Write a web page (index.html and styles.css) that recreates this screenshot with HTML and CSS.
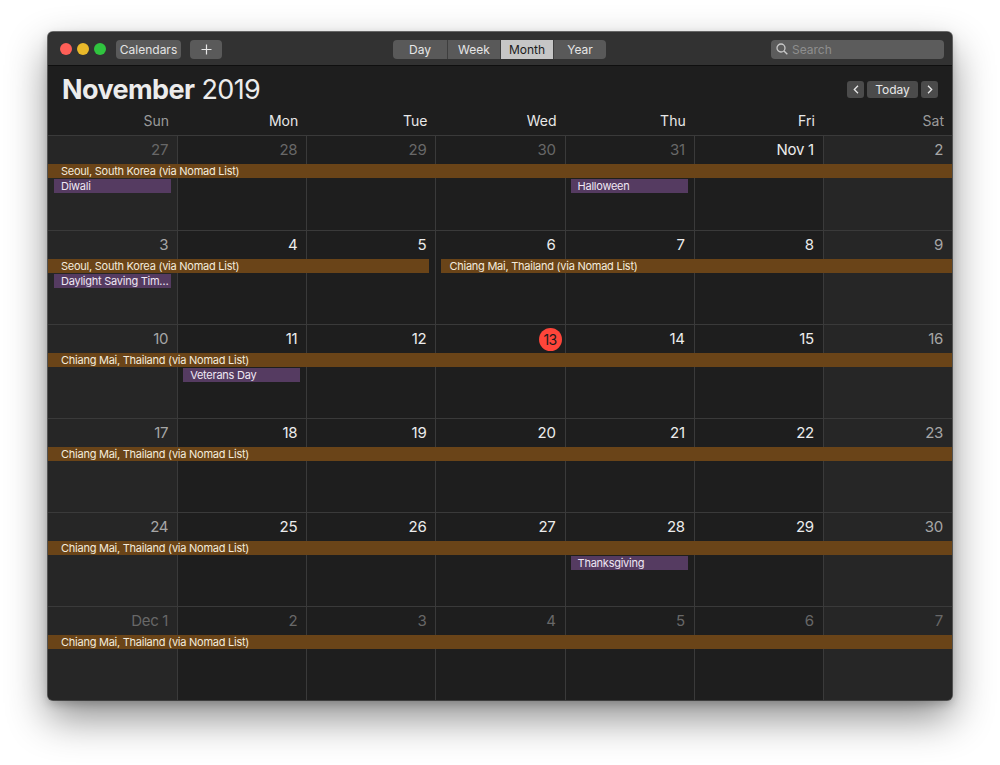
FILE: index.html
```html
<!DOCTYPE html>
<html>
<head>
<meta charset="utf-8">
<link rel="stylesheet" href="styles.css">
</head>
<body>
<div class="window">
  <div class="toolbar">
    <div class="lights">
      <span class="light red"></span>
      <span class="light yellow"></span>
      <span class="light green"></span>
    </div>
    <div class="tb-btn cal-btn">Calendars</div>
    <div class="tb-btn plus-btn">
      <svg width="11" height="11" viewBox="0 0 11 11"><path d="M5.5 0.5v10M0.5 5.5h10" stroke="#e6e6e6" stroke-width="1.2" fill="none"/></svg>
    </div>
    <div class="seg">
      <div class="seg-item">Day</div>
      <div class="seg-item">Week</div>
      <div class="seg-item active">Month</div>
      <div class="seg-item">Year</div>
    </div>
    <div class="search">
      <svg width="12" height="12" viewBox="0 0 12 12"><circle cx="5" cy="5" r="4" stroke="#c8c8c8" stroke-width="1.3" fill="none"/><path d="M8 8l3.3 3.3" stroke="#c8c8c8" stroke-width="1.4"/></svg>
      <span>Search</span>
    </div>
  </div>

  <div class="header">
    <div class="title-row">
      <h1 class="title"><b>November</b> 2019</h1>
      <div class="nav">
        <div class="nav-btn arrow"><svg width="6" height="9" viewBox="0 0 6 9"><path d="M5 0.8L1.3 4.5L5 8.2" stroke="#e8e8e8" stroke-width="1.3" fill="none"/></svg></div>
        <div class="nav-btn today">Today</div>
        <div class="nav-btn arrow"><svg width="6" height="9" viewBox="0 0 6 9"><path d="M1 0.8L4.7 4.5L1 8.2" stroke="#e8e8e8" stroke-width="1.3" fill="none"/></svg></div>
      </div>
    </div>
    <div class="daynames">
      <div class="dn wk">Sun</div>
      <div class="dn">Mon</div>
      <div class="dn">Tue</div>
      <div class="dn">Wed</div>
      <div class="dn">Thu</div>
      <div class="dn">Fri</div>
      <div class="dn wk">Sat</div>
    </div>
  </div>

  <div class="month">
    <!-- week 1 -->
    <div class="week">
      <div class="cell c1 we out"><span class="num">27</span></div>
      <div class="cell c2 out"><span class="num">28</span></div>
      <div class="cell c3 out"><span class="num">29</span></div>
      <div class="cell c4 out"><span class="num">30</span></div>
      <div class="cell c5 out"><span class="num">31</span></div>
      <div class="cell c6"><span class="num">Nov 1</span></div>
      <div class="cell c7 we"><span class="num">2</span></div>
      <div class="bar brown r1 s1 e8">Seoul, South Korea (via Nomad List)</div>
      <div class="bar purple r2 s1 e2">Diwali</div>
      <div class="bar purple r2 s5 e6">Halloween</div>
    </div>
    <!-- week 2 -->
    <div class="week">
      <div class="cell c1 we"><span class="num">3</span></div>
      <div class="cell c2"><span class="num">4</span></div>
      <div class="cell c3"><span class="num">5</span></div>
      <div class="cell c4"><span class="num">6</span></div>
      <div class="cell c5"><span class="num">7</span></div>
      <div class="cell c6"><span class="num">8</span></div>
      <div class="cell c7 we"><span class="num">9</span></div>
      <div class="bar brown r1 s1 e4 ends">Seoul, South Korea (via Nomad List)</div>
      <div class="bar brown r1 s4 e8 starts">Chiang Mai, Thailand (via Nomad List)</div>
      <div class="bar purple r2 s1 e2">Daylight Saving Tim…</div>
    </div>
    <!-- week 3 -->
    <div class="week">
      <div class="cell c1 we"><span class="num">10</span></div>
      <div class="cell c2"><span class="num">11</span></div>
      <div class="cell c3"><span class="num">12</span></div>
      <div class="cell c4"><span class="num today-num">13</span></div>
      <div class="cell c5"><span class="num">14</span></div>
      <div class="cell c6"><span class="num">15</span></div>
      <div class="cell c7 we"><span class="num">16</span></div>
      <div class="bar brown r1 s1 e8">Chiang Mai, Thailand (via Nomad List)</div>
      <div class="bar purple r2 s2 e3">Veterans Day</div>
    </div>
    <!-- week 4 -->
    <div class="week">
      <div class="cell c1 we"><span class="num">17</span></div>
      <div class="cell c2"><span class="num">18</span></div>
      <div class="cell c3"><span class="num">19</span></div>
      <div class="cell c4"><span class="num">20</span></div>
      <div class="cell c5"><span class="num">21</span></div>
      <div class="cell c6"><span class="num">22</span></div>
      <div class="cell c7 we"><span class="num">23</span></div>
      <div class="bar brown r1 s1 e8">Chiang Mai, Thailand (via Nomad List)</div>
    </div>
    <!-- week 5 -->
    <div class="week">
      <div class="cell c1 we"><span class="num">24</span></div>
      <div class="cell c2"><span class="num">25</span></div>
      <div class="cell c3"><span class="num">26</span></div>
      <div class="cell c4"><span class="num">27</span></div>
      <div class="cell c5"><span class="num">28</span></div>
      <div class="cell c6"><span class="num">29</span></div>
      <div class="cell c7 we"><span class="num">30</span></div>
      <div class="bar brown r1 s1 e8">Chiang Mai, Thailand (via Nomad List)</div>
      <div class="bar purple r2 s5 e6">Thanksgiving</div>
    </div>
    <!-- week 6 -->
    <div class="week">
      <div class="cell c1 we out"><span class="num">Dec 1</span></div>
      <div class="cell c2 out"><span class="num">2</span></div>
      <div class="cell c3 out"><span class="num">3</span></div>
      <div class="cell c4 out"><span class="num">4</span></div>
      <div class="cell c5 out"><span class="num">5</span></div>
      <div class="cell c6 out"><span class="num">6</span></div>
      <div class="cell c7 we out"><span class="num">7</span></div>
      <div class="bar brown r1 s1 e8">Chiang Mai, Thailand (via Nomad List)</div>
    </div>
  </div>
</div>
</body>
</html>
```

FILE: styles.css
```css
* { box-sizing: border-box; }
html, body {
  margin: 0;
  padding: 0;
  background: #ffffff;
  font-family: Inter, "Noto Sans", "Liberation Sans", sans-serif;
}
body { padding: 32px 0 0 48px; height: 765px; overflow: hidden; }

.window {
  width: 904px;
  height: 668px;
  background: #1e1e1e;
  border-radius: 5px;
  overflow: hidden;
  display: flex;
  flex-direction: column;
  box-shadow: 0 0 0 1px rgba(0,0,0,0.55), 0 18px 40px rgba(0,0,0,0.45), 0 4px 10px rgba(0,0,0,0.2);
}

/* toolbar */
.toolbar {
  height: 34px;
  flex: none;
  background: #323232;
  border-bottom: 1px solid #0f0f0f;
  display: flex;
  align-items: center;
  padding: 1px 8px 0 11px;
}
.lights { display: flex; gap: 5px; margin-left: 1px; margin-right: 10px; }
.light { width: 12px; height: 12px; border-radius: 50%; display: block; }
.light.red { background: #fe5f57; }
.light.yellow { background: #e9b92a; }
.light.green { background: #30c43f; }

.tb-btn {
  height: 19px;
  background: #5a5a5a;
  border-radius: 4px;
  color: #e4e4e4;
  font-size: 12px;
  display: flex;
  align-items: center;
  justify-content: center;
}
.cal-btn { width: 65px; margin-right: 9px; }
.plus-btn { width: 32px; }

.seg {
  display: flex;
  margin-left: 171px;
  height: 19px;
  background: #595959;
  border-radius: 4px;
  overflow: hidden;
}
.seg-item {
  color: #e6e6e6;
  font-size: 12px;
  display: flex;
  align-items: center;
  justify-content: center;
  width: 53px;
  border-left: 1px solid #3e3e3e;
}
.seg-item:first-child { border-left: none; width: 54px; }
.seg-item.active { background: #c6c6c6; color: #1c1c1c; }

.search {
  margin-left: auto;
  width: 173px;
  height: 19px;
  background: #5c5c5c;
  border-radius: 4px;
  display: flex;
  align-items: center;
  padding-left: 5px;
  gap: 4px;
  color: #8e8e8e;
  font-size: 12px;
}

/* header */
.header {
  height: 70px;
  flex: none;
  display: flex;
  flex-direction: column;
  border-bottom: 1px solid #3a3a3a;
}
.title-row {
  display: flex;
  align-items: flex-start;
  justify-content: space-between;
  padding: 7px 14px 0 14px;
}
.title {
  margin: 0;
  font-size: 27px;
  line-height: 34px;
  font-weight: 400;
  color: #ececec;
  letter-spacing: -0.6px;
}
.title b { font-weight: 700; }
.nav { display: flex; gap: 3px; margin-top: 8px; }
.nav-btn {
  height: 17px;
  background: #4b4b4b;
  border-radius: 3px;
  color: #e8e8e8;
  font-size: 12px;
  display: flex;
  align-items: center;
  justify-content: center;
}
.nav-btn.arrow { width: 17px; }
.nav-btn.today { width: 51px; }

.daynames {
  margin-top: auto;
  display: grid;
  grid-template-columns: repeat(7, 1fr);
  height: 24px;
}
.dn {
  text-align: right;
  padding-right: 8px;
  color: #e8e8e8;
  font-size: 14px;
  line-height: 20px;
}
.dn.wk { color: #9a9a9a; }

/* month grid */
.month {
  flex: 1;
  display: grid;
  grid-template-rows: repeat(6, 1fr);
}
.week {
  display: grid;
  grid-template-columns: repeat(7, 1fr);
  grid-template-rows: 28px 14px 1px 14px 1fr;
  border-top: 1px solid #3a3a3a;
}
.week:first-child { border-top: none; }

.cell {
  grid-row: 1 / -1;
  border-left: 1px solid #3a3a3a;
  text-align: right;
  padding-right: 9px;
  background: #1e1e1e;
}
.cell.we { background: #262626; }
.c1 { grid-column: 1; border-left: none; }
.c2 { grid-column: 2; }
.c3 { grid-column: 3; }
.c4 { grid-column: 4; }
.c5 { grid-column: 5; }
.c6 { grid-column: 6; }
.c7 { grid-column: 7; }

.num {
  display: inline-block;
  font-size: 15px;
  line-height: 28px;
  color: #ececec;
  letter-spacing: -0.3px;
}
.cell.we .num { color: #a6a6a6; }
.cell.out .num { color: #686868; }
.num.today-num {
  width: 23px;
  height: 23px;
  line-height: 23px;
  margin-top: 3px;
  margin-right: -6px;
  border-radius: 50%;
  background: #fe453a;
  color: #1a1a1a;
  text-align: center;
  font-size: 14px;
  letter-spacing: -0.5px;
}

.bar {
  font-size: 11px;
  line-height: 14px;
  height: 14px;
  white-space: nowrap;
  overflow: hidden;
  z-index: 1;
  letter-spacing: -0.25px;
}
.bar.brown {
  background: #6a4418;
  color: #f4ebdc;
  padding-left: 13px;
}
.bar.brown.ends { margin-right: 6px; }
.bar.brown.starts { margin-left: 6px; padding-left: 8px; }
.bar.purple {
  background: #553b61;
  color: #efe7f4;
  margin: 0 6px;
  padding-left: 7px;
}
.r1 { grid-row: 2; }
.r2 { grid-row: 4; }
.s1 { grid-column-start: 1; }
.s2 { grid-column-start: 2; }
.s4 { grid-column-start: 4; }
.s5 { grid-column-start: 5; }
.e2 { grid-column-end: 2; }
.e3 { grid-column-end: 3; }
.e4 { grid-column-end: 4; }
.e6 { grid-column-end: 6; }
.e8 { grid-column-end: 8; }
```
